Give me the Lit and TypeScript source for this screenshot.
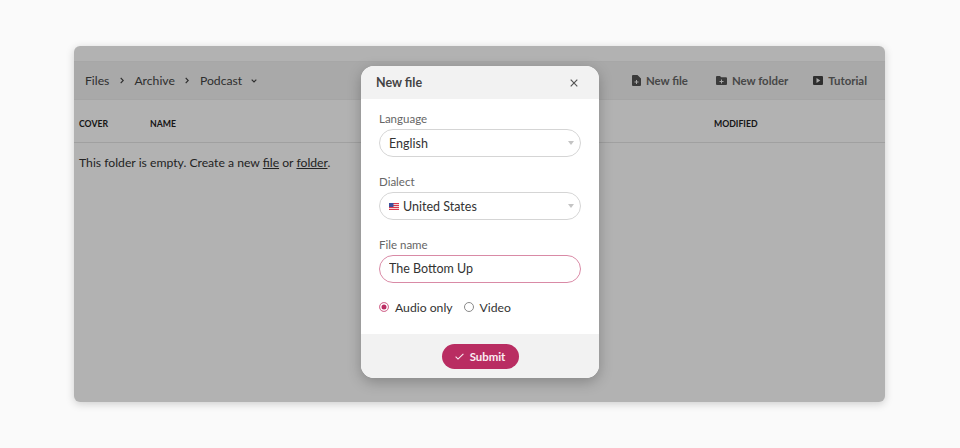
import { LitElement, html, css } from 'lit';
import { customElement } from 'lit/decorators.js';

@customElement('app-root')
export class AppRoot extends LitElement {
  static styles = css`
    :host {
      display: block;
      height: 448px;
      background: #fafafa;
      font-family: 'Lato', 'Noto Sans', sans-serif;
      color: #222;
      padding: 46px 75px 0 74px;
      box-sizing: border-box;
    }
    .panel {
      position: relative;
      height: 356px;
      background: #fff;
      border-radius: 6px;
      box-shadow: 0 2px 8px rgba(0, 0, 0, 0.18);
      overflow: hidden;
    }
    .top {
      height: 15px;
      border-bottom: 1px solid #f0f0f0;
    }
    .toolbar {
      height: 37px;
      background: #f3f3f3;
      border-bottom: 1px solid #ececec;
      display: flex;
      align-items: center;
      justify-content: space-between;
      padding: 0 18px 0 11px;
      font-size: 12.2px;
      color: #444;
    }
    .crumbs, .actions, .action {
      display: flex;
      align-items: center;
    }
    .crumbs svg { margin: 0 10.5px; }
    .crumbs svg.caret { margin: 1px 0 0 9px; }
    .actions { gap: 25px; }
    .action { gap: 5px; font-weight: 700; color: #666; font-size: 11.4px; }
    .action.first { margin-right: 3px; }
    .head {
      display: grid;
      grid-template-columns: 71px 564px 1fr;
      height: 43px;
      align-items: center;
      padding: 5px 5px 0;
      box-sizing: border-box;
      border-bottom: 1px solid #e6e6e6;
      font-size: 8.7px;
      font-weight: 700;
      color: #222;
    }
    .empty {
      padding: 10px 5px;
      font-size: 12.2px;
      line-height: 20px;
      color: #333;
    }
    .empty a { color: inherit; }
    .overlay {
      position: absolute;
      inset: 0;
      background: rgba(0, 0, 0, 0.3);
      display: flex;
      justify-content: center;
      padding-top: 20px;
      box-sizing: border-box;
    }
    .modal {
      width: 238px;
      height: 312px;
      margin-left: 1px;
      background: #fff;
      border-radius: 13px;
      overflow: hidden;
      display: flex;
      flex-direction: column;
      box-shadow: 0 4px 14px rgba(0, 0, 0, 0.25);
    }
    .modal-head {
      height: 33px;
      flex: none;
      background: #f2f2f2;
      display: flex;
      align-items: center;
      justify-content: space-between;
      padding: 0 21px 0 15px;
      font-size: 12.5px;
      font-weight: 700;
      color: #444;
    }
    .modal-body {
      flex: 1;
      padding: 10px 18px 0;
    }
    .field { margin-bottom: 15px; height: 48px; }
    .field label {
      display: block;
      height: 20px;
      line-height: 20px;
      font-size: 11.5px;
      color: #666;
    }
    .control {
      position: relative;
      display: flex;
      align-items: center;
      gap: 4px;
      box-sizing: border-box;
      width: 100%;
      height: 28px;
      padding: 0 9px;
      border: 1px solid #d5d5d5;
      border-radius: 14px;
      background: #fff;
      font: inherit;
      font-size: 12.5px;
      color: #333;
      outline: none;
    }
    .control.focus { border-color: #d98aa6; padding-bottom: 2px; }
    .arrow {
      position: absolute;
      right: 6px;
      top: 11px;
      border: 3.5px solid transparent;
      border-top: 4px solid #c4c4c4;
      border-bottom: 0;
    }
    .radios {
      display: flex;
      align-items: center;
      font-size: 12.2px;
      color: #333;
      margin-top: -1px;
      height: 20px;
    }
    .radio {
      width: 8px;
      height: 8px;
      border-radius: 50%;
      border: 1px solid #8a8a8a;
      margin-right: 6px;
      box-sizing: content-box;
      flex: none;
    }
    .radio.on {
      border-color: #d87a9b;
      background: #bb2d63;
      box-shadow: inset 0 0 0 1.5px #fff;
    }
    .opt { display: flex; align-items: center; margin-right: 11px; }
    .modal-foot {
      height: 44px;
      flex: none;
      background: #f2f2f2;
      display: flex;
      align-items: center;
      justify-content: center;
    }
    .submit {
      width: 77px;
      height: 25px;
      border: 0;
      border-radius: 13px;
      background: #b92d62;
      color: #fbeef3;
      font: inherit;
      font-size: 11.4px;
      font-weight: 700;
      display: flex;
      align-items: center;
      justify-content: center;
      gap: 6px;
      padding: 0;
    }
  `;

  render() {
    const chevron = html`<svg width="4" height="7" viewBox="0 0 4 7"><path d="M.7.8l2.500 2.700-2.500 2.700" fill="none" stroke="#444" stroke-width="1.200"/></svg>`;
    return html`
      <div class="panel">
        <div class="top"></div>
        <div class="toolbar">
          <div class="crumbs">
            <span>Files</span>${chevron}<span>Archive</span>${chevron}<span>Podcast</span>
            <svg class="caret" width="6" height="4" viewBox="0 0 6 4"><path d="M.7.7l2.300 2.300 2.300-2.300" fill="none" stroke="#444" stroke-width="1.200"/></svg>
          </div>
          <div class="actions">
            <div class="action first">
              <svg width="9" height="11" viewBox="0 0 9 11"><path fill-rule="evenodd" d="M1 0h4.500L9 3.500V10a1 1 0 0 1-1 1H1a1 1 0 0 1-1-1V1a1 1 0 0 1 1-1zM4 5v1.500H2.500v1H4V9h1V7.500h1.500v-1H5V5z" fill="#555"/></svg>
              New file
            </div>
            <div class="action">
              <svg width="11" height="9" viewBox="0 0 11 9"><path fill-rule="evenodd" d="M1 0h3l1.200 1.200H10a1 1 0 0 1 1 1V8a1 1 0 0 1-1 1H1a1 1 0 0 1-1-1V1a1 1 0 0 1 1-1zM5 3.500V5H3.500v1H5v1.500h1V6h1.500V5H6V3.500z" fill="#555"/></svg>
              New folder
            </div>
            <div class="action">
              <svg width="10" height="9" viewBox="0 0 10 9"><path fill-rule="evenodd" d="M1 0h8a1 1 0 0 1 1 1v7a1 1 0 0 1-1 1H1a1 1 0 0 1-1-1V1a1 1 0 0 1 1-1zM3.500 2v5l3.800-2.500z" fill="#444"/></svg>
              Tutorial
            </div>
          </div>
        </div>
        <div class="head"><span>COVER</span><span>NAME</span><span>MODIFIED</span></div>
        <div class="empty">This folder is empty. Create a new <a href="#">file</a> or <a href="#">folder</a>.</div>
        <div class="overlay">
          <div class="modal">
            <div class="modal-head">
              <span>New file</span>
              <svg width="8" height="8" viewBox="0 0 8 8"><path d="M.7.7l6.600 6.600M7.300.7L.7 7.300" stroke="#555" stroke-width="1.200"/></svg>
            </div>
            <div class="modal-body">
              <div class="field">
                <label>Language</label>
                <div class="control">English<span class="arrow"></span></div>
              </div>
              <div class="field">
                <label>Dialect</label>
                <div class="control">
                  <svg width="10" height="7" viewBox="0 0 10 7">
                    <rect width="10" height="7" rx="1" fill="#f4d4d6"/>
                    <path d="M0 .5h10M0 2.500h10M0 4.500h10M0 6.500h10" stroke="#d9384c" stroke-width="1"/>
                    <rect width="4.500" height="4" fill="#3c4f9c"/>
                  </svg>
                  United States<span class="arrow"></span>
                </div>
              </div>
              <div class="field">
                <label>File name</label>
                <input class="control focus" .value=${'The Bottom Up'} />
              </div>
              <div class="radios">
                <span class="opt"><span class="radio on"></span>Audio only</span>
                <span class="opt"><span class="radio"></span>Video</span>
              </div>
            </div>
            <div class="modal-foot">
              <button class="submit">
                <svg width="9" height="7" viewBox="0 0 9 7"><path d="M.6 3.700l2.400 2.400L8.400.8" fill="none" stroke="#fbeef3" stroke-width="1.100"/></svg>
                Submit
              </button>
            </div>
          </div>
        </div>
      </div>
    `;
  }
}
